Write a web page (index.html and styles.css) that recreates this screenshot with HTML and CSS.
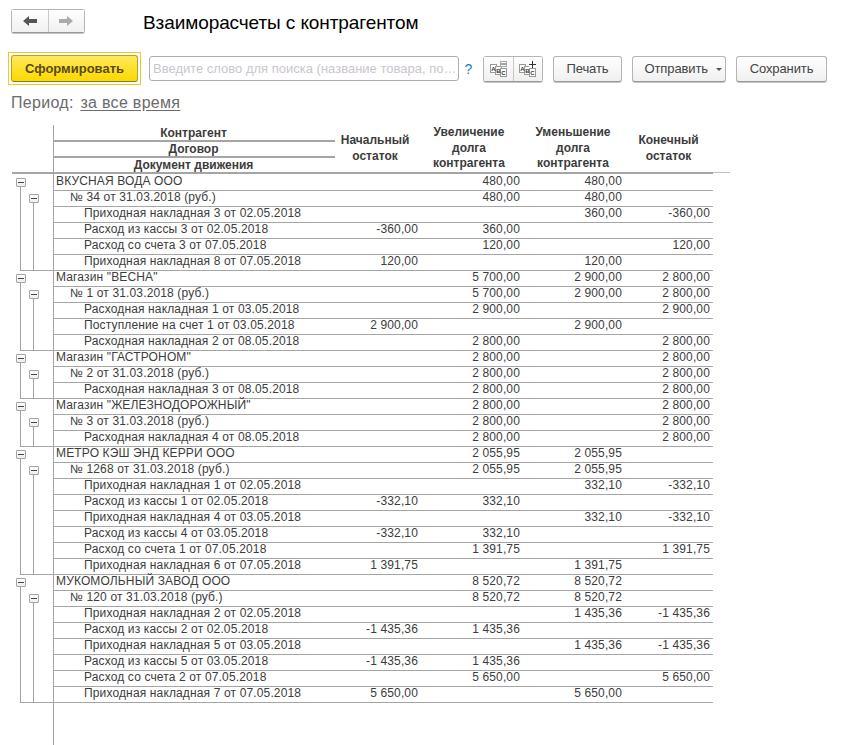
FILE: index.html
```html
<!DOCTYPE html>
<html lang="ru">

<head>
    <meta charset="UTF-8">
    <title>Взаиморасчеты с контрагентом</title>
    <link rel="stylesheet" href="styles.css">
</head>

<body>
    <div class="title-bar">
        <div class="nav-group">
            <button class="nav-btn">
                <svg width="14" height="10" viewBox="0 0 14 10"><path d="M0 5 L6 0 V3 H14 V7 H6 V10 Z" fill="#555"/></svg>
            </button>
            <button class="nav-btn">
                <svg width="14" height="10" viewBox="0 0 14 10"><path d="M14 5 L8 0 V3 H0 V7 H8 V10 Z" fill="#aaa"/></svg>
            </button>
        </div>
        <h1>Взаиморасчеты с контрагентом</h1>
    </div>

    <div class="toolbar">
        <div class="focus-frame"><button class="btn-main">Сформировать</button></div>
        <input class="search" type="text" placeholder="Введите слово для поиска (название товара, покупателя)">
        <span class="help">?</span>
        <div class="icon-group">
            <button class="icon-btn">
                <svg width="17" height="16" viewBox="0 0 17 16">
                    <rect x="0.5" y="3.5" width="6" height="8" fill="#fff" stroke="#999"/>
                    <rect x="5.5" y="5.5" width="6" height="8" fill="#fff" stroke="#999"/>
                    <rect x="10.5" y="7.5" width="6" height="8" fill="#fff" stroke="#999"/>
                    <text x="3.5" y="10" class="abc">A</text>
                    <text x="8.5" y="12" class="abc">B</text>
                    <text x="13.5" y="14" class="abc">C</text>
                    <rect x="10.5" y="0.5" width="6" height="5" fill="#fff" stroke="#aaa"/>
                    <path d="M11 3 H16" stroke="#444"/>
                </svg>
            </button>
            <button class="icon-btn">
                <svg width="17" height="16" viewBox="0 0 17 16">
                    <rect x="0.5" y="3.5" width="6" height="8" fill="#fff" stroke="#999"/>
                    <rect x="5.5" y="5.5" width="6" height="8" fill="#fff" stroke="#999"/>
                    <rect x="10.5" y="7.5" width="6" height="8" fill="#fff" stroke="#999"/>
                    <text x="3.5" y="10" class="abc">A</text>
                    <text x="8.5" y="12" class="abc">B</text>
                    <text x="13.5" y="14" class="abc">C</text>
                    <rect x="10" y="0" width="7" height="7" fill="#fff"/>
                    <path d="M10 3.5 H17 M13.5 0 V7" stroke="#333"/>
                </svg>
            </button>
        </div>
        <button class="btn btn-print">Печать</button>
        <button class="btn btn-send">Отправить <span class="caret"></span></button>
        <button class="btn btn-save">Сохранить</button>
    </div>

    <div class="period">Период: <a class="period-link">за все время</a></div>

    <div class="report">
        <div class="head">
            <div class="head-tree"></div>
            <div class="head-name">
                <div>Контрагент</div>
                <div>Договор</div>
                <div>Документ движения</div>
            </div>
            <div class="head-col c1">Начальный<br>остаток</div>
            <div class="head-col c2">Увеличение<br>долга<br>контрагента</div>
            <div class="head-col c3">Уменьшение<br>долга<br>контрагента</div>
            <div class="head-col c4">Конечный<br>остаток</div>
            <div class="head-rest"></div>
        </div>

        <div class="row"><div class="tree t1"><i class="toggle"></i></div><div class="name">ВКУСНАЯ ВОДА ООО</div><div class="num"></div><div class="num">480,00</div><div class="num">480,00</div><div class="num"></div></div>
        <div class="row"><div class="tree t2"><i class="toggle"></i></div><div class="name l2">№ 34 от 31.03.2018 (руб.)</div><div class="num"></div><div class="num">480,00</div><div class="num">480,00</div><div class="num"></div></div>
        <div class="row"><div class="tree t3"></div><div class="name l3">Приходная накладная 3 от 02.05.2018</div><div class="num"></div><div class="num"></div><div class="num">360,00</div><div class="num">-360,00</div></div>
        <div class="row"><div class="tree t3"></div><div class="name l3">Расход из кассы 3 от 02.05.2018</div><div class="num">-360,00</div><div class="num">360,00</div><div class="num"></div><div class="num"></div></div>
        <div class="row"><div class="tree t3"></div><div class="name l3">Расход со счета 3 от 07.05.2018</div><div class="num"></div><div class="num">120,00</div><div class="num"></div><div class="num">120,00</div></div>
        <div class="row"><div class="tree t3 end"></div><div class="name l3">Приходная накладная 8 от 07.05.2018</div><div class="num">120,00</div><div class="num"></div><div class="num">120,00</div><div class="num"></div></div>

        <div class="row"><div class="tree t1"><i class="toggle"></i></div><div class="name">Магазин "ВЕСНА"</div><div class="num"></div><div class="num">5 700,00</div><div class="num">2 900,00</div><div class="num">2 800,00</div></div>
        <div class="row"><div class="tree t2"><i class="toggle"></i></div><div class="name l2">№ 1 от 31.03.2018 (руб.)</div><div class="num"></div><div class="num">5 700,00</div><div class="num">2 900,00</div><div class="num">2 800,00</div></div>
        <div class="row"><div class="tree t3"></div><div class="name l3">Расходная накладная 1 от 03.05.2018</div><div class="num"></div><div class="num">2 900,00</div><div class="num"></div><div class="num">2 900,00</div></div>
        <div class="row"><div class="tree t3"></div><div class="name l3">Поступление на счет 1 от 03.05.2018</div><div class="num">2 900,00</div><div class="num"></div><div class="num">2 900,00</div><div class="num"></div></div>
        <div class="row"><div class="tree t3 end"></div><div class="name l3">Расходная накладная 2 от 08.05.2018</div><div class="num"></div><div class="num">2 800,00</div><div class="num"></div><div class="num">2 800,00</div></div>

        <div class="row"><div class="tree t1"><i class="toggle"></i></div><div class="name">Магазин "ГАСТРОНОМ"</div><div class="num"></div><div class="num">2 800,00</div><div class="num"></div><div class="num">2 800,00</div></div>
        <div class="row"><div class="tree t2"><i class="toggle"></i></div><div class="name l2">№ 2 от 31.03.2018 (руб.)</div><div class="num"></div><div class="num">2 800,00</div><div class="num"></div><div class="num">2 800,00</div></div>
        <div class="row"><div class="tree t3 end"></div><div class="name l3">Расходная накладная 3 от 08.05.2018</div><div class="num"></div><div class="num">2 800,00</div><div class="num"></div><div class="num">2 800,00</div></div>

        <div class="row"><div class="tree t1"><i class="toggle"></i></div><div class="name">Магазин "ЖЕЛЕЗНОДОРОЖНЫЙ"</div><div class="num"></div><div class="num">2 800,00</div><div class="num"></div><div class="num">2 800,00</div></div>
        <div class="row"><div class="tree t2"><i class="toggle"></i></div><div class="name l2">№ 3 от 31.03.2018 (руб.)</div><div class="num"></div><div class="num">2 800,00</div><div class="num"></div><div class="num">2 800,00</div></div>
        <div class="row"><div class="tree t3 end"></div><div class="name l3">Расходная накладная 4 от 08.05.2018</div><div class="num"></div><div class="num">2 800,00</div><div class="num"></div><div class="num">2 800,00</div></div>

        <div class="row"><div class="tree t1"><i class="toggle"></i></div><div class="name">МЕТРО КЭШ ЭНД КЕРРИ ООО</div><div class="num"></div><div class="num">2 055,95</div><div class="num">2 055,95</div><div class="num"></div></div>
        <div class="row"><div class="tree t2"><i class="toggle"></i></div><div class="name l2">№ 1268 от 31.03.2018 (руб.)</div><div class="num"></div><div class="num">2 055,95</div><div class="num">2 055,95</div><div class="num"></div></div>
        <div class="row"><div class="tree t3"></div><div class="name l3">Приходная накладная 1 от 02.05.2018</div><div class="num"></div><div class="num"></div><div class="num">332,10</div><div class="num">-332,10</div></div>
        <div class="row"><div class="tree t3"></div><div class="name l3">Расход из кассы 1 от 02.05.2018</div><div class="num">-332,10</div><div class="num">332,10</div><div class="num"></div><div class="num"></div></div>
        <div class="row"><div class="tree t3"></div><div class="name l3">Приходная накладная 4 от 03.05.2018</div><div class="num"></div><div class="num"></div><div class="num">332,10</div><div class="num">-332,10</div></div>
        <div class="row"><div class="tree t3"></div><div class="name l3">Расход из кассы 4 от 03.05.2018</div><div class="num">-332,10</div><div class="num">332,10</div><div class="num"></div><div class="num"></div></div>
        <div class="row"><div class="tree t3"></div><div class="name l3">Расход со счета 1 от 07.05.2018</div><div class="num"></div><div class="num">1 391,75</div><div class="num"></div><div class="num">1 391,75</div></div>
        <div class="row"><div class="tree t3 end"></div><div class="name l3">Приходная накладная 6 от 07.05.2018</div><div class="num">1 391,75</div><div class="num"></div><div class="num">1 391,75</div><div class="num"></div></div>

        <div class="row"><div class="tree t1"><i class="toggle"></i></div><div class="name">МУКОМОЛЬНЫЙ ЗАВОД ООО</div><div class="num"></div><div class="num">8 520,72</div><div class="num">8 520,72</div><div class="num"></div></div>
        <div class="row"><div class="tree t2"><i class="toggle"></i></div><div class="name l2">№ 120 от 31.03.2018 (руб.)</div><div class="num"></div><div class="num">8 520,72</div><div class="num">8 520,72</div><div class="num"></div></div>
        <div class="row"><div class="tree t3"></div><div class="name l3">Приходная накладная 2 от 02.05.2018</div><div class="num"></div><div class="num"></div><div class="num">1 435,36</div><div class="num">-1 435,36</div></div>
        <div class="row"><div class="tree t3"></div><div class="name l3">Расход из кассы 2 от 02.05.2018</div><div class="num">-1 435,36</div><div class="num">1 435,36</div><div class="num"></div><div class="num"></div></div>
        <div class="row"><div class="tree t3"></div><div class="name l3">Приходная накладная 5 от 03.05.2018</div><div class="num"></div><div class="num"></div><div class="num">1 435,36</div><div class="num">-1 435,36</div></div>
        <div class="row"><div class="tree t3"></div><div class="name l3">Расход из кассы 5 от 03.05.2018</div><div class="num">-1 435,36</div><div class="num">1 435,36</div><div class="num"></div><div class="num"></div></div>
        <div class="row"><div class="tree t3"></div><div class="name l3">Расход со счета 2 от 07.05.2018</div><div class="num"></div><div class="num">5 650,00</div><div class="num"></div><div class="num">5 650,00</div></div>
        <div class="row"><div class="tree t3 end"></div><div class="name l3">Приходная накладная 7 от 07.05.2018</div><div class="num">5 650,00</div><div class="num"></div><div class="num">5 650,00</div><div class="num"></div></div>

        <div class="tail"></div>
    </div>
</body>

</html>
```

FILE: styles.css
```css
* {
    box-sizing: border-box;
}

html,
body {
    height: 745px;
    overflow: hidden;
}

body {
    margin: 0;
    background: #fff;
    font-family: "Liberation Sans", Arial, sans-serif;
    font-size: 12px;
    color: #3c3c3c;
}

button {
    font-family: inherit;
    padding: 0;
    cursor: pointer;
}

.title-bar {
    display: flex;
    align-items: flex-start;
    height: 24px;
    margin: 9px 0 0 11px;
}

.title-bar h1 {
    margin: 2px 0 0 58px;
    font-size: 19px;
    letter-spacing: -0.09px;
    line-height: 24px;
    font-weight: normal;
    color: #000;
}

.nav-group,
.icon-group {
    display: flex;
    border: 1px solid #b4b4b4;
    border-bottom-color: #999;
    border-radius: 3px;
    box-shadow: 0 1px 0 #c4c4c4;
}

.nav-group {
    width: 74px;
    height: 24px;
}

.nav-btn,
.icon-btn {
    flex: 1;
    display: flex;
    align-items: center;
    justify-content: center;
    border: 0;
    background: linear-gradient(#ffffff, #f0f0f0);
}

.nav-btn + .nav-btn,
.icon-btn + .icon-btn {
    border-left: 1px solid #c8c8c8;
}

.toolbar {
    display: flex;
    align-items: center;
    margin: 19px 0 0 8px;
    height: 33px;
}

.focus-frame {
    width: 133px;
    height: 33px;
    padding: 2px;
    border: 1px solid #f6c81e;
}

.btn-main {
    display: block;
    width: 100%;
    height: 27px;
    border: 1px solid #b79f2a;
    border-bottom-color: #8a7a20;
    border-radius: 3px;
    background: linear-gradient(#ffe95a, #fbd900);
    font-size: 13px;
    font-weight: bold;
    color: #5b4a18;
}

.search {
    width: 310px;
    height: 25px;
    margin-left: 8px;
    padding: 0 0 0 3px;
    border: 1px solid #aeaeae;
    border-radius: 3px;
    font-family: inherit;
    font-size: 13px;
    text-overflow: ellipsis;
    outline: none;
}

.search::placeholder {
    color: #cbc5cf;
    opacity: 1;
}

.help {
    width: 24px;
    padding-right: 5px;
    text-align: center;
    font-size: 14px;
    color: #2080c0;
}

.icon-group {
    width: 60px;
    height: 26px;
}

.abc {
    font-size: 6px;
    font-weight: bold;
    text-anchor: middle;
    fill: #333;
}

.btn {
    height: 26px;
    margin-left: 10px;
    border: 1px solid #b4b4b4;
    border-bottom-color: #999;
    border-radius: 3px;
    box-shadow: 0 1px 0 #c4c4c4;
    background: linear-gradient(#ffffff, #f0f0f0);
    font-size: 13px;
    letter-spacing: -0.1px;
    color: #444;
}

.btn-print {
    width: 69px;
}

.btn-send {
    width: 94px;
    padding-left: 8px;
}

.btn-save {
    width: 91px;
}

.caret {
    display: inline-block;
    margin-left: 4px;
    vertical-align: middle;
    border: 3px solid transparent;
    border-top: 3px solid #555;
    border-bottom: 0;
}

.period {
    margin: 9px 0 0 11px;
    height: 18px;
    font-size: 16px;
    letter-spacing: 0.3px;
    line-height: 18px;
    color: #6b6b6b;
}

.period-link {
    margin-left: 2px;
    color: #6b6b6b;
    text-decoration: underline;
    text-underline-offset: 2px;
}

.report {
    margin: 13px 0 0 12px;
    letter-spacing: 0.14px;
}

.head {
    display: grid;
    grid-template-columns: 41px 282px 85px 102px 102px 89px 17px;
    height: 49px;
    margin-bottom: -1px;
    letter-spacing: 0;
}

.head-tree {
    border-bottom: 2px solid #a5a5a5;
}

.head-name {
    border-left: 1px solid #a5a5a5;
    border-bottom: 2px solid #a5a5a5;
}

.head-name div {
    height: 16px;
    padding-right: 2px;
    text-align: center;
    font-weight: bold;
    line-height: 15px;
    border-bottom: 2px solid #a5a5a5;
}

.head-name div:first-child {
    height: 17px;
    line-height: 17px;
}

.head-name div:last-child {
    height: 14px;
    border-bottom: 0;
}

.head-col {
    display: flex;
    align-items: center;
    justify-content: center;
    text-align: center;
    font-weight: bold;
    line-height: 15.5px;
    border-bottom: 2px solid #a5a5a5;
}

.c1 {
    padding-right: 5px;
}

.c2 {
    padding-right: 4px;
}

.head-rest {
    margin-bottom: 1px;
    border-bottom: 1px solid #bdbdbd;
}

.row {
    display: grid;
    grid-template-columns: 41px 282px 85px 102px 102px 89px;
    height: 16px;
    line-height: 17px;
}

.name,
.num {
    border-bottom: 1px solid #a5a5a5;
    white-space: nowrap;
}

.name {
    padding-left: 2px;
    border-left: 1px solid #a5a5a5;
}

.l2 {
    padding-left: 16px;
}

.l3 {
    padding-left: 30px;
}

.num {
    padding-right: 2px;
    text-align: right;
}

.num:last-child {
    padding-right: 3px;
}

.tree {
    display: flex;
    align-items: center;
    background-repeat: no-repeat;
}

.t1 {
    padding-left: 4px;
    background-image: linear-gradient(#a5a5a5, #a5a5a5);
    background-position: 8px 100%;
    background-size: 1px 50%;
}

.t2 {
    padding-left: 17px;
    background-image: linear-gradient(#a5a5a5, #a5a5a5), linear-gradient(#a5a5a5, #a5a5a5);
    background-position: 8px 0, 21px 100%;
    background-size: 1px 100%, 1px 50%;
}

.t3 {
    background-image: linear-gradient(#a5a5a5, #a5a5a5), linear-gradient(#a5a5a5, #a5a5a5);
    background-position: 8px 0, 21px 0;
    background-size: 1px 100%, 1px 100%;
}

.t3.end {
    background-image: linear-gradient(#a5a5a5, #a5a5a5), linear-gradient(#a5a5a5, #a5a5a5), linear-gradient(#a5a5a5, #a5a5a5);
    background-position: 8px 0, 21px 0, 8px 100%;
    background-size: 1px 100%, 1px 100%, 33px 1px;
}

.toggle {
    display: flex;
    align-items: center;
    justify-content: center;
    width: 10px;
    height: 9px;
    border: 1px solid #a5a5a5;
    border-radius: 1px;
    background: linear-gradient(#ffffff, #eeeeee);
}

.toggle::before {
    content: "";
    width: 6px;
    height: 1px;
    background: #444;
}

.tail {
    height: 44px;
    margin-left: 41px;
    border-left: 1px solid #a5a5a5;
}
```
